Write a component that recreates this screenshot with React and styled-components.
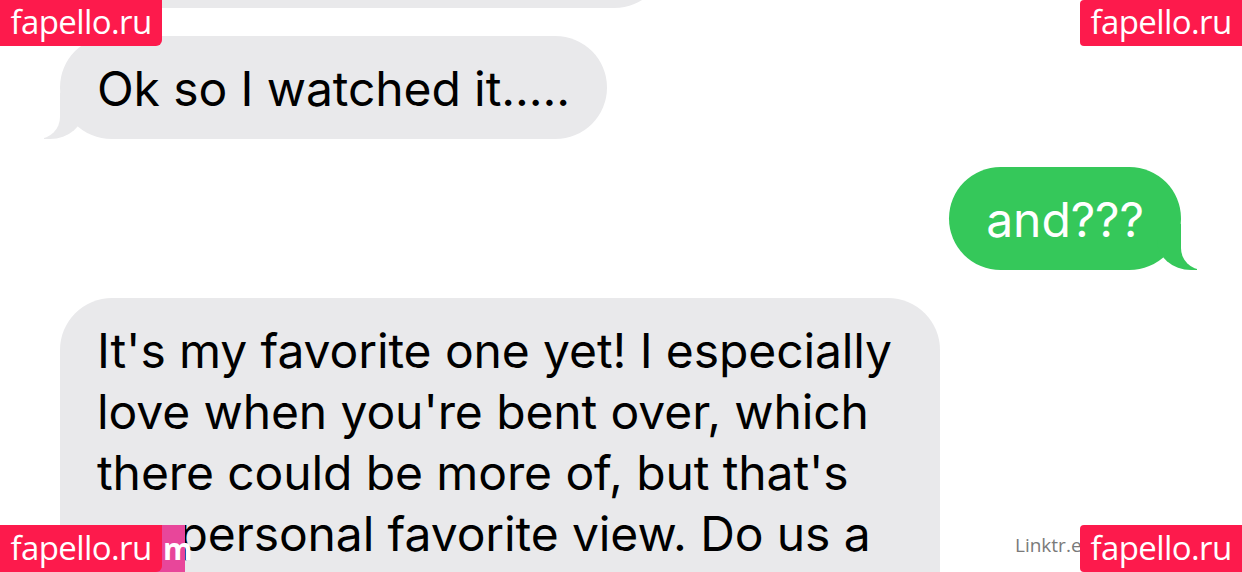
import React from 'react'
import styled, { createGlobalStyle } from 'styled-components'

const GlobalStyle = createGlobalStyle`
  html, body {
    margin: 0;
    padding: 0;
    background: #fff;
  }
  body {
    width: 1242px;
    height: 572px;
    overflow: hidden;
    font-family: Inter, "Liberation Sans", Arial, sans-serif;
  }
`

const Screen = styled.main`
  position: relative;
  width: 1242px;
  height: 572px;
  overflow: hidden;
  background: #fff;
`

const Thread = styled.section`
  display: flex;
  flex-direction: column;
  gap: 28px;
  padding: 0 61px 0 60px;
  margin-top: -95px;
`

const Row = styled.div`
  display: flex;
  justify-content: ${(p) => (p.$me ? 'flex-end' : 'flex-start')};
`

const Bubble = styled.div`
  position: relative;
  box-sizing: border-box;
  min-height: 103px;
  padding: 22px 37px 20px;
  border-radius: 52px;
  font-size: 48px;
  line-height: 61px;
  letter-spacing: -0.1px;
  color: ${(p) => (p.$me ? '#fff' : '#000')};
  background: ${(p) => (p.$me ? '#35c85a' : '#e9e9eb')};
  width: ${(p) => p.$width || 'auto'};

  &::before,
  &::after {
    content: '';
    position: absolute;
    bottom: 0;
    height: 46px;
    display: ${(p) => (p.$tail ? 'block' : 'none')};
  }
  &::before {
    width: 40px;
    background: ${(p) => (p.$me ? '#35c85a' : '#e9e9eb')};
    ${(p) =>
      p.$me
        ? 'right: -16px; border-bottom-left-radius: 34px 30px;'
        : 'left: -16px; border-bottom-right-radius: 34px 30px;'}
  }
  &::after {
    width: 52px;
    background: #fff;
    ${(p) =>
      p.$me
        ? 'right: -52px; border-bottom-left-radius: 22px;'
        : 'left: -52px; border-bottom-right-radius: 22px;'}
  }
`

const Watermark = styled.div`
  position: absolute;
  ${(p) => (p.$bottom ? 'top: 525px; height: 47px;' : 'top: 0; height: 46px;')}
  ${(p) => (p.$right ? 'right: 0;' : 'left: 0;')}
  width: 162px;
  box-sizing: border-box;
  display: flex;
  align-items: center;
  justify-content: center;
  padding-bottom: 3px;
  background: #fd1a4c;
  color: #fff;
  font-family: "Open Sans", "Liberation Sans", sans-serif;
  font-size: 33px;
  letter-spacing: -0.6px;
  white-space: nowrap;
  border-radius: ${(p) => (p.$right ? '4px 0 0 4px' : '0 0 6px 0')};
  z-index: 3;
`

const PinkTag = styled.div`
  position: absolute;
  top: 525px;
  left: 150px;
  width: 35px;
  height: 47px;
  box-sizing: border-box;
  padding-left: 13px;
  display: flex;
  align-items: center;
  background: #e8469a;
  color: #fff;
  font-family: "Open Sans", "Liberation Sans", sans-serif;
  font-weight: 700;
  font-size: 30px;
  z-index: 2;
`

const LinkNote = styled.div`
  position: absolute;
  top: 532px;
  left: 1015px;
  font-family: "Open Sans", "Liberation Sans", sans-serif;
  font-size: 19px;
  color: #7a7a7a;
  white-space: nowrap;
  z-index: 1;
`

const messages = [
  { id: 0, me: false, width: '606px', text: '' },
  { id: 1, me: false, tail: true, text: 'Ok so I watched it.....' },
  { id: 2, me: true, tail: true, text: 'and???' },
  {
    id: 3,
    me: false,
    width: '880px',
    lines: [
      "It's my favorite one yet! I especially",
      "love when you're bent over, which",
      "there could be more of, but that's",
      'my personal favorite view. Do us a',
      'favor and make more of those'
    ]
  }
]

function App() {
  return (
    <Screen>
      <GlobalStyle />
      <Thread>
        {messages.map((m) => (
          <Row key={m.id} $me={m.me}>
            <Bubble $me={m.me} $tail={m.tail} $width={m.width}>
              {m.lines
                ? m.lines.map((l, i) => (
                    <React.Fragment key={i}>
                      {l}
                      {i < m.lines.length - 1 && <br />}
                    </React.Fragment>
                  ))
                : m.text}
            </Bubble>
          </Row>
        ))}
      </Thread>
      <Watermark>fapello.ru</Watermark>
      <Watermark $right>fapello.ru</Watermark>
      <PinkTag>m</PinkTag>
      <Watermark $bottom>fapello.ru</Watermark>
      <LinkNote>Linktr.ee/fapello</LinkNote>
      <Watermark $bottom $right>fapello.ru</Watermark>
    </Screen>
  )
}

export default App
